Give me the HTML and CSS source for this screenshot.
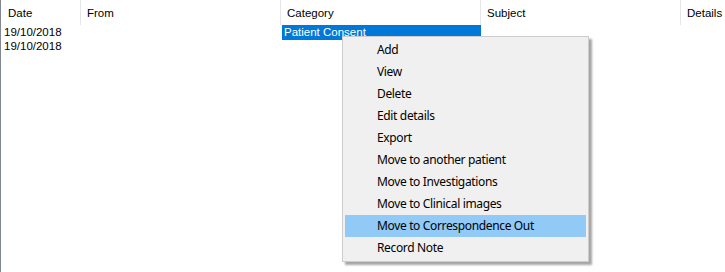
FILE: index.html
```html
<!DOCTYPE html>
<html lang="en">
<head>
    <meta charset="UTF-8">
    <title>Correspondence In</title>
    <link rel="stylesheet" href="styles.css">
</head>
<body>

<div class="list">
    <div class="list-header">
        <div class="col col-date">Date</div>
        <div class="col">From</div>
        <div class="col">Category</div>
        <div class="col">Subject</div>
        <div class="col col-last">Details</div>
    </div>
    <div class="row">
        <div class="cell cell-date">19/10/2018</div>
        <div class="cell"></div>
        <div class="cell selected">Patient Consent</div>
        <div class="cell"></div>
        <div class="cell"></div>
    </div>
    <div class="row">
        <div class="cell cell-date">19/10/2018</div>
        <div class="cell"></div>
        <div class="cell"></div>
        <div class="cell"></div>
        <div class="cell"></div>
    </div>

    <ul class="context-menu">
        <li>Add</li>
        <li>View</li>
        <li>Delete</li>
        <li>Edit details</li>
        <li>Export</li>
        <li>Move to another patient</li>
        <li>Move to Investigations</li>
        <li>Move to Clinical images</li>
        <li class="hover">Move to Correspondence Out</li>
        <li>Record Note</li>
    </ul>
</div>

</body>
</html>
```

FILE: styles.css
```css
body {
    margin: 0;
    font-family: "Liberation Sans", Arial, sans-serif;
    font-size: 11.5px;
    color: #000;
    background: #fff;
}

.list {
    position: relative;
    height: 272px;
    border-left: 1px solid #828790;
    box-sizing: border-box;
}

.list-header,
.row {
    display: grid;
    grid-template-columns: 80px 200px 200px 200px 1fr;
}

.list-header {
    height: 25px;
}

.col {
    border-right: 1px solid #e5e5e5;
    padding-left: 6px;
    line-height: 26px;
    height: 25px;
    box-sizing: border-box;
}

.col-date {
    padding-left: 7px;
}

.col-last {
    border-right: none;
}

.row {
    height: 14px;
}

.cell {
    line-height: 15px;
    padding-left: 2px;
    white-space: nowrap;
}

.cell-date {
    padding-left: 3px;
}

.selected {
    background-color: #0078d7;
    color: #fff;
    margin-left: 1px;
}

.context-menu {
    position: absolute;
    left: 341px;
    top: 36px;
    width: 247px;
    margin: 0;
    padding: 2px;
    list-style: none;
    font-family: "Noto Sans", "Open Sans", sans-serif;
    font-size: 12px;
    letter-spacing: -0.35px;
    background-color: #f0f0f0;
    border: 1px solid #cccccc;
    box-shadow: 3px 3px 2px rgba(0, 0, 0, 0.35);
    box-sizing: border-box;
}

.context-menu li {
    height: 22px;
    line-height: 22px;
    padding-left: 32px;
}

.context-menu li.hover {
    background-color: #91c9f7;
}
```
